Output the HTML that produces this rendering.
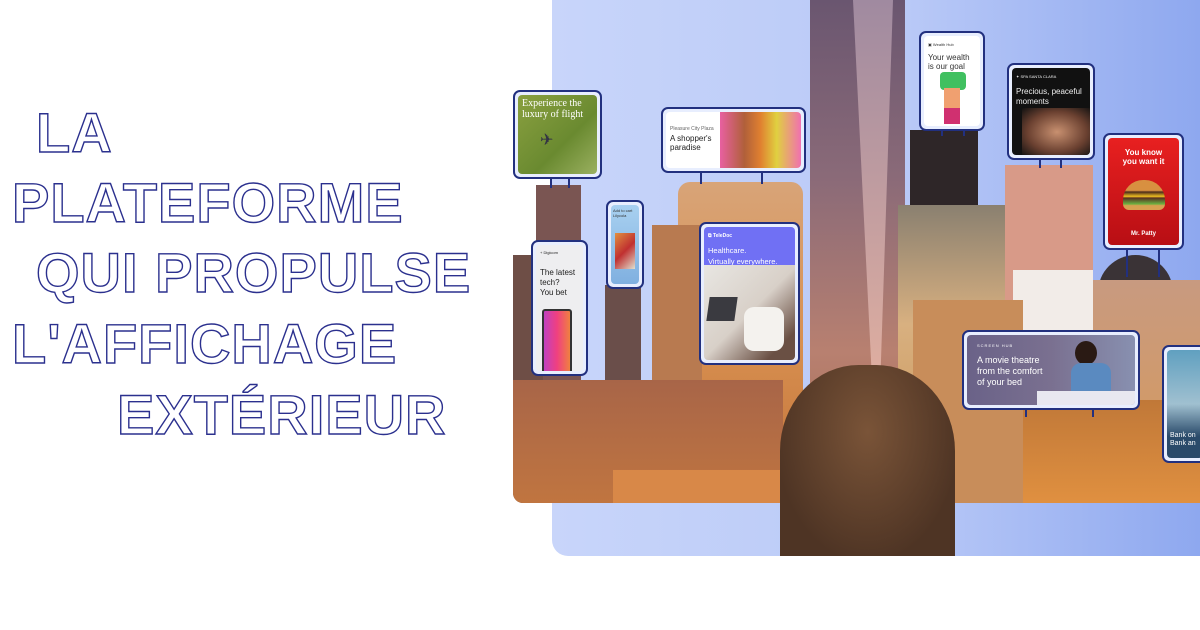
<!DOCTYPE html>
<html><head><meta charset="utf-8"><style>
*{margin:0;padding:0;box-sizing:border-box}
body{width:1200px;height:630px;background:#fff;position:relative;overflow:hidden;font-family:"Liberation Sans",sans-serif}
.t{position:absolute;font-family:"Liberation Sans",sans-serif;font-weight:700;font-size:56px;line-height:56px;color:#fff;-webkit-text-stroke:1.4px #2b308e;letter-spacing:1px;white-space:nowrap}
.a{position:absolute}
.card{position:absolute;border:2px solid #22307f;border-radius:7px;background:#e8eefe;padding:3px}
.card>.in{width:100%;height:100%;border-radius:4px;overflow:hidden;position:relative}
.post{position:absolute;width:2px;background:#22307f}
</style></head><body>
<div class="t" style="left:36px;top:105px">LA</div>
<div class="t" style="left:12px;top:175px">PLATEFORME</div>
<div class="t" style="left:36px;top:245px">QUI PROPULSE</div>
<div class="t" style="left:12px;top:316px">L'AFFICHAGE</div>
<div class="t" style="left:117px;top:387px">EXTÉRIEUR</div>

<div class="a" style="left:552px;top:0;width:648px;height:556px;border-bottom-left-radius:16px;background:linear-gradient(90deg,#c8d5fa 0%,#b9c9f7 55%,#8ea8ef 100%)"></div>

<div class="a" style="left:513px;top:0;width:687px;height:503px;overflow:hidden;border-bottom-left-radius:10px">
  <div class="a" style="left:297px;top:0;width:95px;height:503px;background:linear-gradient(180deg,#6a5670 0%,#8a6a78 35%,#b88070 70%,#a06a50 100%)"></div>
  <div class="a" style="left:340px;top:0;width:40px;height:480px;background:linear-gradient(180deg,#a08aa0,#f0b8a0);clip-path:polygon(0 0,100% 0,60% 100%)"></div>
  <div class="a" style="left:23px;top:185px;width:45px;height:320px;background:#7a5552"></div>
  <div class="a" style="left:0;top:255px;width:30px;height:250px;background:#6e4e46"></div>
  <div class="a" style="left:92px;top:285px;width:36px;height:220px;background:#6a4e4a"></div>
  <div class="a" style="left:165px;top:182px;width:125px;height:321px;border-radius:12px 12px 0 0;background:linear-gradient(180deg,#d8a478,#d89050 50%,#c07038)"></div>
  <div class="a" style="left:139px;top:225px;width:50px;height:278px;background:#b87a50"></div>
  <div class="a" style="left:0;top:380px;width:270px;height:123px;background:linear-gradient(180deg,#a86548,#c07540)"></div>
  <div class="a" style="left:100px;top:470px;width:170px;height:33px;background:#d88848"></div>
  <div class="a" style="left:397px;top:130px;width:68px;height:110px;background:#2e2628"></div>
  <div class="a" style="left:385px;top:205px;width:112px;height:298px;background:linear-gradient(180deg,#8a8070,#d8b080 40%,#c89050)"></div>
  <div class="a" style="left:492px;top:165px;width:88px;height:140px;background:#d89a88"></div>
  <div class="a" style="left:585px;top:255px;width:75px;height:60px;border-radius:38px 38px 0 0;background:#3a3336"></div>
  <div class="a" style="left:560px;top:280px;width:127px;height:223px;background:linear-gradient(180deg,#c89a80,#d89a58)"></div>
  <div class="a" style="left:500px;top:270px;width:80px;height:60px;background:#f2ece8"></div>
  <div class="a" style="left:460px;top:400px;width:227px;height:103px;background:linear-gradient(180deg,#c07838,#e09040)"></div>
  <div class="a" style="left:400px;top:300px;width:110px;height:203px;background:#c88d5a"></div>
</div>

<div class="a" style="left:780px;top:365px;width:175px;height:191px;border-radius:45% 45% 0 0;background:radial-gradient(ellipse at 50% 35%,#7a5438,#4e3424 75%)"></div>

<div class="post" style="left:550px;top:176px;height:12px"></div><div class="post" style="left:568px;top:176px;height:12px"></div>
<div class="post" style="left:700px;top:170px;height:14px"></div><div class="post" style="left:761px;top:170px;height:14px"></div>
<div class="post" style="left:941px;top:128px;height:8px"></div><div class="post" style="left:963px;top:128px;height:8px"></div>
<div class="post" style="left:1039px;top:158px;height:10px"></div><div class="post" style="left:1060px;top:158px;height:10px"></div>
<div class="post" style="left:1126px;top:247px;height:30px"></div><div class="post" style="left:1158px;top:247px;height:30px"></div>
<div class="post" style="left:1025px;top:407px;height:10px"></div><div class="post" style="left:1092px;top:407px;height:10px"></div>

<div class="card" style="left:513px;top:90px;width:89px;height:89px"><div class="in" style="background:linear-gradient(135deg,#8aa040,#6a8a30 60%,#9ab060);color:#fff;font-family:'Liberation Serif',serif;font-size:10px;line-height:11px;padding:3px 4px">Experience the luxury of flight<div style="position:absolute;left:22px;top:40px;font-size:16px;color:#334">✈</div></div></div>

<div class="card" style="left:661px;top:107px;width:145px;height:66px"><div class="in" style="background:#fff"><div style="position:absolute;left:4px;top:14px;font-size:5px;color:#666">Pleasure City Plaza</div><div style="position:absolute;left:4px;top:22px;font-size:8px;line-height:9px;color:#222;width:48px">A shopper's paradise</div><div style="position:absolute;left:54px;top:0;right:0;bottom:0;background:linear-gradient(90deg,#e860a0,#b0603a 30%,#e08030 50%,#e0d040 70%,#f070b0)"></div></div></div>

<div class="card" style="left:919px;top:31px;width:66px;height:100px"><div class="in" style="background:#fff;font-size:8px;line-height:9px;color:#333;padding:4px 4px"><div style="font-size:4px">▣ Wealth Hub</div><div style="margin-top:4px">Your wealth is our goal</div><div style="position:absolute;left:16px;top:36px;width:26px;height:18px;background:#40c060;border-radius:4px"></div><div style="position:absolute;left:20px;top:52px;width:16px;height:20px;background:#f0a070"></div><div style="position:absolute;left:20px;top:72px;width:16px;height:16px;background:#d03070"></div></div></div>

<div class="card" style="left:1007px;top:63px;width:88px;height:97px"><div class="in" style="background:#111;color:#eee;font-size:8px;line-height:10px;padding:4px"><div style="font-size:4px">✦ SPA SANTA CLARA</div><div style="margin-top:5px;white-space:nowrap">Precious, peaceful<br>moments</div><div style="position:absolute;left:10px;top:40px;width:70px;height:48px;background:radial-gradient(ellipse,#c89070,#6a4030 60%,#111)"></div></div></div>

<div class="card" style="left:1103px;top:133px;width:81px;height:117px"><div class="in" style="background:linear-gradient(180deg,#e82020,#b80e14);color:#fff;font-weight:700;font-size:8px;line-height:9px;text-align:center;padding-top:10px">You know<br>you want it<div style="margin:14px auto 0;width:42px;height:30px;border-radius:20px 20px 6px 6px;background:linear-gradient(180deg,#d89040 0,#d89040 35%,#4a2a1a 40%,#f0c020 55%,#5a3020 60%,#6ab040 80%,#d8a050 85%)"></div><div style="position:absolute;bottom:6px;width:100%;font-size:6px">Mr. Patty</div></div></div>

<div class="card" style="left:531px;top:240px;width:57px;height:136px"><div class="in" style="background:#eeeef0;color:#222;font-size:8px;line-height:10px;padding:3px 4px"><div style="font-size:4px">+ Digicom</div><div style="margin-top:10px">The latest tech?<br>You bet</div><div style="position:absolute;left:6px;top:64px;width:30px;height:66px;border-radius:3px;border:2px solid #333;background:linear-gradient(90deg,#c040c0,#f04080,#f08040)"></div></div></div>

<div class="card" style="left:606px;top:200px;width:38px;height:89px"><div class="in" style="background:linear-gradient(180deg,#a8d0f0,#80b0e0);font-size:4px;padding:3px 2px;color:#333">Add to cart Lilycola<div style="position:absolute;left:4px;top:28px;width:20px;height:36px;background:linear-gradient(135deg,#e09040,#c03030 50%,#e0e0d0)"></div></div></div>

<div class="card" style="left:699px;top:222px;width:101px;height:143px"><div class="in" style="background:#e8e4e0"><div style="height:38px;background:#7070f4;color:#fff;font-size:7.5px;line-height:11px;padding:4px 4px;white-space:nowrap"><div style="font-size:5px;font-weight:700">⧉ TeleDoc</div><div style="margin-top:3px">Healthcare.<br>Virtually everywhere.</div></div><div style="position:absolute;left:0;top:38px;right:0;bottom:0;background:linear-gradient(135deg,#e8e6e2,#d8d0c8 50%,#6a5044 85%)"></div><div style="position:absolute;left:4px;top:70px;width:28px;height:24px;background:#3a3a40;transform:skewX(-8deg)"></div><div style="position:absolute;left:40px;top:80px;width:40px;height:44px;background:#f4f2ee;border-radius:10px"></div></div></div>

<div class="card" style="left:962px;top:330px;width:178px;height:80px"><div class="in" style="background:linear-gradient(90deg,#6a6288,#7a7090 50%,#8890b0);color:#fff;font-size:9px;line-height:11px;padding:5px 10px"><div style="font-size:4px;letter-spacing:1px">SCREEN HUB</div><div style="margin-top:4px">A movie theatre<br>from the comfort<br>of your bed</div><div style="position:absolute;left:108px;top:6px;width:22px;height:24px;border-radius:50%;background:#2a1a14"></div><div style="position:absolute;left:104px;top:28px;width:40px;height:30px;border-radius:10px 10px 0 0;background:#5a8ac0"></div><div style="position:absolute;left:70px;top:56px;right:0;height:14px;background:#e8e8f0"></div></div></div>

<div class="card" style="left:1162px;top:345px;width:46px;height:118px"><div class="in" style="background:linear-gradient(180deg,#60a0c0,#a0c0d0 50%,#2a4a6a 80%);color:#fff;font-size:7px;line-height:8px;padding:82px 3px 0">Bank on<br>Bank an</div></div>
</body></html>
